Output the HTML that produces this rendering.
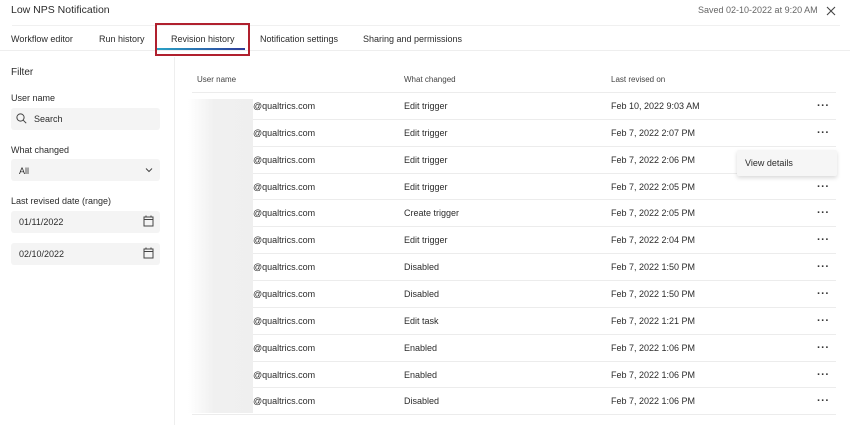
<!DOCTYPE html>
<html><head><meta charset="utf-8"><style>
*{margin:0;padding:0;box-sizing:border-box}
body{width:850px;height:425px;overflow:hidden;background:#fff;font-family:"Liberation Sans",sans-serif;color:#2b2b2b;position:relative}
.a{position:absolute;white-space:nowrap}
.f{font-size:9px}
.box{position:absolute;background:#f4f4f4;border-radius:3px}
.line{position:absolute;height:1px;background:#ececec}
.dots{position:absolute;font-size:11px;font-weight:bold;letter-spacing:0.5px;color:#333}
</style></head><body>
<div class="a" style="left:11px;top:4px;font-size:10.5px">Low NPS Notification</div>
<div class="a" style="left:698px;top:5px;font-size:9px;color:#666">Saved 02-10-2022 at 9:20 AM</div>
<svg class="a" style="left:826px;top:6px" width="10" height="10" viewBox="0 0 10 10"><path d="M1 1L9 9M9 1L1 9" stroke="#444" stroke-width="1.1"/></svg>
<div class="line" style="left:12px;top:25px;width:828px;background:#f0f0f0"></div>
<div class="a f" style="left:11px;top:34px">Workflow editor</div>
<div class="a f" style="left:99px;top:34px">Run history</div>
<div class="a f" style="left:171px;top:34px">Revision history</div>
<div class="a f" style="left:260px;top:34px">Notification settings</div>
<div class="a f" style="left:363px;top:34px">Sharing and permissions</div>
<div class="line" style="left:0;top:50px;width:850px;background:#eee"></div>
<div class="a" style="left:157px;top:48px;width:88px;height:2px;background:linear-gradient(90deg,#2aa3c6,#2d3b9a)"></div>
<div class="a" style="left:155px;top:23px;width:95px;height:33px;border:2px solid #b0202e"></div>
<div class="a" style="left:174px;top:57px;width:1px;height:368px;background:#eee"></div>
<div class="a" style="left:11px;top:67px;font-size:10px">Filter</div>
<div class="a f" style="left:11px;top:93px">User name</div>
<div class="box" style="left:11px;top:108px;width:149px;height:22px"></div>
<svg class="a" style="left:16px;top:113px" width="11" height="11" viewBox="0 0 11 11"><circle cx="4.5" cy="4.5" r="3.6" fill="none" stroke="#444" stroke-width="1"/><path d="M7.2 7.2L10.2 10.2" stroke="#444" stroke-width="1"/></svg>
<div class="a f" style="left:34px;top:114px">Search</div>
<div class="a f" style="left:11px;top:145px">What changed</div>
<div class="box" style="left:11px;top:159px;width:149px;height:22px"></div>
<div class="a f" style="left:19px;top:166px">All</div>
<svg class="a" style="left:145px;top:167px" width="8" height="6" viewBox="0 0 8 6"><path d="M1 1.5L4 4.5L7 1.5" fill="none" stroke="#444" stroke-width="1"/></svg>
<div class="a f" style="left:11px;top:196px">Last revised date (range)</div>
<div class="box" style="left:11px;top:211px;width:149px;height:22px"></div>
<div class="a f" style="left:19px;top:217px">01/11/2022</div>
<div class="box" style="left:11px;top:243px;width:149px;height:22px"></div>
<div class="a f" style="left:19px;top:249px">02/10/2022</div>
<svg class="a" style="left:143px;top:215px" width="11" height="12" viewBox="0 0 11 12"><rect x="1" y="2" width="9" height="9" fill="none" stroke="#444" stroke-width="1"/><path d="M1 4.5H10M3 0.5V2.5M8 0.5V2.5" stroke="#444" stroke-width="1"/></svg>
<svg class="a" style="left:143px;top:247px" width="11" height="12" viewBox="0 0 11 12"><rect x="1" y="2" width="9" height="9" fill="none" stroke="#444" stroke-width="1"/><path d="M1 4.5H10M3 0.5V2.5M8 0.5V2.5" stroke="#444" stroke-width="1"/></svg>
<div class="a" style="left:197px;top:75px;font-size:8px;color:#444">User name</div>
<div class="a" style="left:404px;top:75px;font-size:8px;color:#444">What changed</div>
<div class="a" style="left:611px;top:75px;font-size:8px;color:#444">Last revised on</div>
<div class="line" style="left:192px;top:92px;width:644px"></div>
<div class="a" style="left:188px;top:99px;width:65px;height:314px;background:linear-gradient(90deg,#fff,#f0f0f0 40%,#efefef)"></div>
<div id="rows"></div>
<script>
var d=[["Edit trigger","Feb 10, 2022 9:03 AM"],["Edit trigger","Feb 7, 2022 2:07 PM"],["Edit trigger","Feb 7, 2022 2:06 PM"],["Edit trigger","Feb 7, 2022 2:05 PM"],["Create trigger","Feb 7, 2022 2:05 PM"],["Edit trigger","Feb 7, 2022 2:04 PM"],["Disabled","Feb 7, 2022 1:50 PM"],["Disabled","Feb 7, 2022 1:50 PM"],["Edit task","Feb 7, 2022 1:21 PM"],["Enabled","Feb 7, 2022 1:06 PM"],["Enabled","Feb 7, 2022 1:06 PM"],["Disabled","Feb 7, 2022 1:06 PM"]];
var h="";
for(var i=0;i<d.length;i++){var t=92+i*26.85;var c=t+9;
h+='<div class="a f" style="left:253px;top:'+c+'px">@qualtrics.com</div><div class="a f" style="left:404px;top:'+c+'px">'+d[i][0]+'</div><div class="a f" style="left:611px;top:'+c+'px">'+d[i][1]+'</div>';
if(i!=2)h+='<div class="dots" style="left:817px;top:'+(c-1)+'px">···</div>';
h+='<div class="line" style="left:253px;top:'+(t+26.85)+'px;width:583px"></div>';}
document.getElementById("rows").innerHTML=h;
</script>
<div class="line" style="left:192px;top:414px;width:644px"></div>
<div class="a" style="left:737px;top:150px;width:100px;height:26px;background:#f6f6f6;box-shadow:0 2px 4px rgba(0,0,0,0.15);border-radius:2px"></div>
<div class="a f" style="left:745px;top:158px">View details</div>
</body></html>
